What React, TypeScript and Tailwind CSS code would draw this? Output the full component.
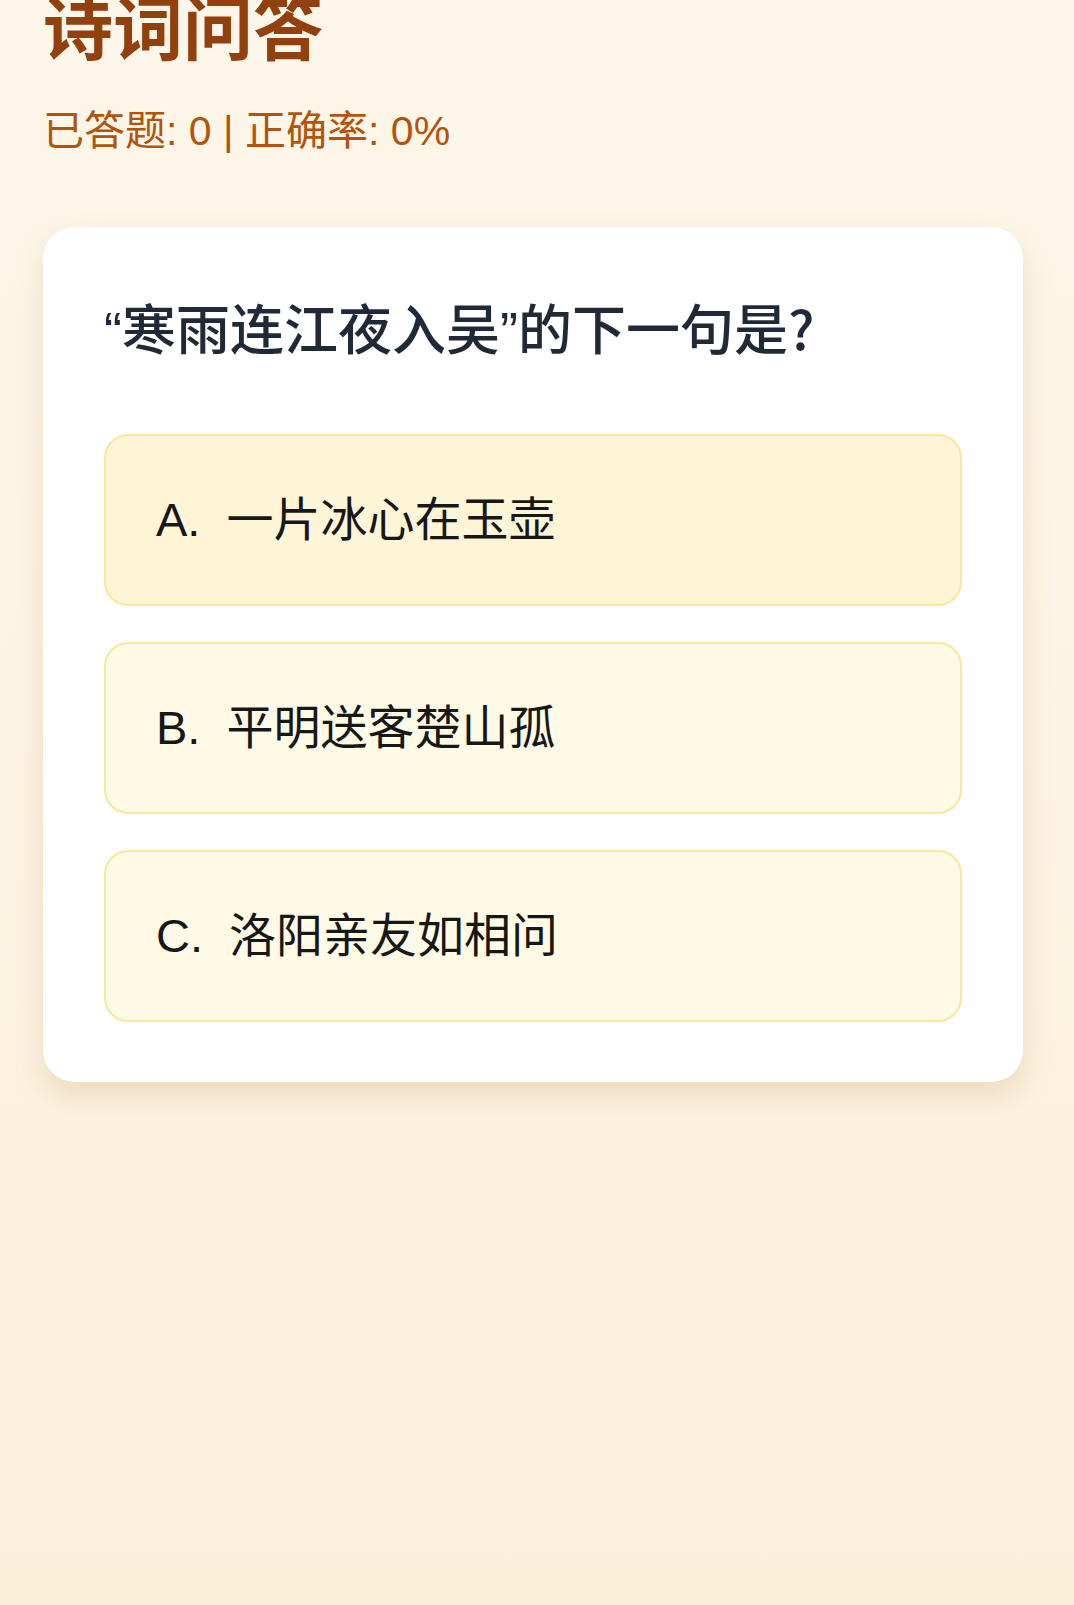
import { useState } from "react";

const options = [
  { key: "A", text: "一片冰心在玉壶" },
  { key: "B", text: "平明送客楚山孤" },
  { key: "C", text: "洛阳亲友如相问" },
];

export default function App() {
  const [answered] = useState(0);
  const [accuracy] = useState(0);

  return (
    <div
      className="min-h-[1605px] bg-gradient-to-b from-[#fcf7ea] to-[#fcefda] px-[43px] overflow-hidden"
      style={{ fontFamily: '"Liberation Sans", "Noto Sans CJK SC", sans-serif' }}
    >
      <h1 className="-mt-[5px] text-[70px] leading-[72px] font-bold text-[#92400e]">
        诗词问答
      </h1>
      <p className="mt-[40px] text-[41px] leading-[48px] text-[#b45309]">
        已答题: {answered} | 正确率: {accuracy}%
      </p>

      <div className="mt-[72px] w-[980px] rounded-[32px] bg-white px-[61px] pt-[68px] pb-[60px] shadow-[0_14px_28px_rgba(180,140,80,0.22)]">
        <h2 className="text-[54px] leading-[64px] font-medium text-[#1f2937]">
          “寒雨连江夜入吴”的下一句是
          <span className="font-['Noto_Sans_CJK_SC']">?</span>
        </h2>

        <div className="mt-[71px] flex flex-col gap-[36px]">
          {options.map((o, i) => (
            <button
              key={o.key}
              className={
                "flex items-center rounded-[24px] border-2 border-[#fbe69a] px-[50px] py-[54px] text-left text-[47px] leading-[60px] text-[#171717] " +
                (i === 0 ? "bg-[#fef5d6]" : "bg-[#fefae6]")
              }
            >
              <span className="mr-[26px]">{o.key}.</span>
              <span>{o.text}</span>
            </button>
          ))}
        </div>
      </div>
    </div>
  );
}
